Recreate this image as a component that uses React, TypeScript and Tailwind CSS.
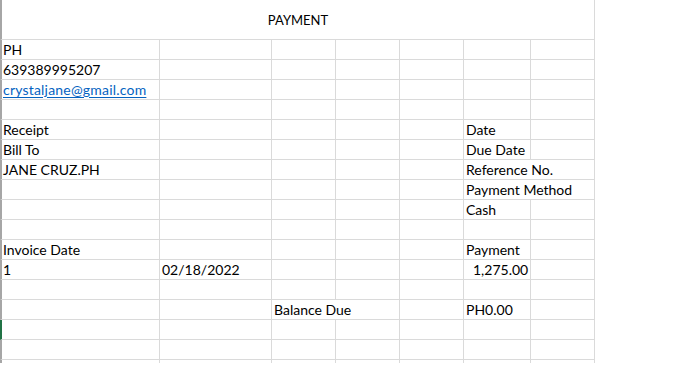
import React from "react";

type Cell = { text?: string; kind?: "link" | "num"; noRight?: boolean };

const widths = ["w-[158px]", "w-[112px]", "w-[64px]", "w-[64px]", "w-[64px]", "w-[67px]", "w-[64px]"];

const rows: Record<number, Cell>[] = [
  { 0: { text: "PH" } },
  { 0: { text: "639389995207" } },
  { 0: { text: "crystaljane@gmail.com", kind: "link" } },
  {},
  { 0: { text: "Receipt" }, 5: { text: "Date" } },
  { 0: { text: "Bill To" }, 5: { text: "Due Date" } },
  { 0: { text: "JANE CRUZ.PH" }, 5: { text: "Reference No.", noRight: true } },
  { 5: { text: "Payment Method", noRight: true } },
  { 5: { text: "Cash" } },
  {},
  { 0: { text: "Invoice Date" }, 5: { text: "Payment" } },
  { 0: { text: "1" }, 1: { text: "02/18/2022" }, 5: { text: "1,275.00", kind: "num" } },
  {},
  { 2: { text: "Balance Due", noRight: true }, 5: { text: "PH0.00" } },
  {},
  {},
];

function Row({ cells, selected }: { cells: Record<number, Cell>; selected?: boolean }) {
  return (
    <div
      className={
        "flex h-[20px] border-b border-l-2 border-b-[#dadada] " +
        (selected ? "border-l-[#217346]" : "border-l-[#a6a6a6]")
      }
    >
      {widths.map((w, i) => {
        const c = cells[i];
        return (
          <div
            key={i}
            className={
              w +
              " relative h-full shrink-0 border-r " +
              (c?.noRight ? "border-r-transparent" : "border-r-[#dadada]")
            }
          >
            {c?.text ? (
              <span
                className={
                  "absolute bottom-0 z-10 whitespace-nowrap leading-[18px] " +
                  (i === 0 ? "left-[1px] " : "left-[2px] ") +
                  (c.kind === "link"
                    ? "tracking-[0.2px] text-[#0563c1] underline underline-offset-[2px]"
                    : "text-black") +
                  (c.kind === "num" ? " pl-[7px]" : "")
                }
              >
                {c.text}
              </span>
            ) : null}
          </div>
        );
      })}
    </div>
  );
}

export default function App() {
  return (
    <div className="h-[384px] w-[683px] overflow-hidden bg-white font-['Lato',sans-serif] text-[14px]">
      <div className="w-[595px]">
        <div className="flex h-[40px] items-start justify-center border-b border-l-2 border-r border-b-[#dadada] border-l-[#a6a6a6] border-r-[#dadada] pt-[11px] text-[13px] text-black">
          PAYMENT
        </div>
        {rows.map((r, idx) => (
          <Row key={idx} cells={r} selected={idx === 14} />
        ))}
        <div className="flex h-[3px] border-l-2 border-l-[#a6a6a6]">
          {widths.map((w, i) => (
            <div key={i} className={w + " h-full shrink-0 border-r border-r-[#dadada]"} />
          ))}
        </div>
      </div>
    </div>
  );
}
